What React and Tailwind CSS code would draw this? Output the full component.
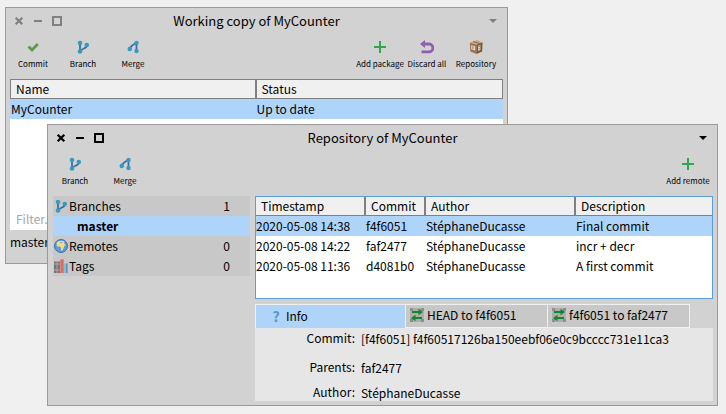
import React from "react";

function BranchIcon() {
  return (
    <svg viewBox="0 0 14 14" className="size-3.5 shrink-0" aria-hidden="true">
      <path d="M4 3v8.500M11 5C11 8.500 7 8 4.500 11" fill="none" stroke="#3d6c9e" strokeWidth="1.800" />
      <circle cx="4" cy="3" r="2.300" fill="#329cc6" />
      <circle cx="4" cy="11.500" r="2.300" fill="#329cc6" />
      <circle cx="10.800" cy="5" r="2.300" fill="#329cc6" />
    </svg>
  );
}

function MergeIcon() {
  return (
    <svg viewBox="0 0 14 14" className="size-3.5 shrink-0" aria-hidden="true">
      <path d="M10.500 3v8.500M4 9C4 5.500 7 6 10 2.500" fill="none" stroke="#3d6c9e" strokeWidth="1.800" />
      <circle cx="10.500" cy="3" r="2.200" fill="#329cc6" />
      <circle cx="10.500" cy="11" r="2.200" fill="#329cc6" />
      <circle cx="3.800" cy="9" r="2.300" fill="#329cc6" />
    </svg>
  );
}

function CheckIcon() {
  return (
    <svg viewBox="0 0 14 14" className="size-3.5" aria-hidden="true">
      <path d="M2.500 6.500 6 10l5.800-6" fill="none" stroke="#5a9c4a" strokeWidth="2.800" />
    </svg>
  );
}

function PlusIcon() {
  return (
    <svg viewBox="0 0 14 14" className="size-3.5" aria-hidden="true">
      <path d="M7 1v12M1 7h12" fill="none" stroke="#2ea850" strokeWidth="2" />
    </svg>
  );
}

function UndoIcon() {
  return (
    <svg viewBox="0 0 14 14" className="size-3.5" aria-hidden="true">
      <path d="M3.500 4H9a3.900 3.900 0 0 1 0 7.800H1.500" fill="none" stroke="#8f5fb0" strokeWidth="2.800" />
      <path d="M0 4 5 0v8z" fill="#8f5fb0" />
    </svg>
  );
}

function BoxIcon() {
  return (
    <svg viewBox="0 0 16 16" className="h-3.5 w-4" aria-hidden="true">
      <path d="M1 3 9 0l6 2.500-7 3z" fill="#c9a57c" />
      <path d="M1 3l7.500 2.500V16L1.500 13z" fill="#9a7350" />
      <path d="M8.500 5.500 15.500 2.500 15 13l-6.500 3z" fill="#7a5636" />
      <path d="M2.500 6v4.500l4.500 1.500V7zM10.500 6.500v6l2.500-1v-6z" fill="#e8dccb" />
      <path d="M4.500 7v3.500M11.800 6.500v1.500M11.800 9.500v1" stroke="#8a6544" strokeWidth="1" />
      <path d="M4.500 1.700 12 4" stroke="#8a6544" strokeWidth="1" />
    </svg>
  );
}

function GlobeIcon() {
  return (
    <svg viewBox="0 0 14 14" className="size-3.5 shrink-0" aria-hidden="true">
      <circle cx="7" cy="7" r="6.500" fill="#5b9bd8" stroke="#3a6fae" strokeWidth="1" />
      <path d="M2.500 4C4 1.500 8 1 10.500 2.500L10 4l1.800 2.500-1.600.5L9.500 9.500 7.800 12 6.800 11 7 8.500 5.500 7.500H3z" fill="#f3dc82" />
      <path d="M6 3.800 8.500 3.500" stroke="#5b9bd8" strokeWidth=".8" />
    </svg>
  );
}

function BooksIcon() {
  return (
    <svg viewBox="0 0 14 14" className="size-3.5 shrink-0" aria-hidden="true">
      <path d="M0 2.500h6V14H0z" fill="#777" />
      <path d="M6 .5h4V14H6z" fill="#e08078" />
      <path d="M10 4.500h4V14h-4z" fill="#8dbbd6" />
      <path d="M0 5h6M0 11h6M3 2.500V14" stroke="#aaa" strokeWidth=".9" />
      <path d="M8 .5V14" stroke="#c8605c" strokeWidth="1" />
      <path d="M12.700 4.500V14" stroke="#4d91b8" strokeWidth="1.200" />
    </svg>
  );
}

function SwapIcon() {
  return (
    <svg viewBox="0 0 14 14" className="size-3.5 shrink-0" aria-hidden="true">
      <path d="M0 0h14v14H0z" fill="#8e8e8e" />
      <path d="M3 0h8v14H3zM0 3h14v8H0z" fill="#b8bcb8" opacity=".7" />
      <path d="M2 4h7M12 10H5" stroke="#16852e" strokeWidth="2" />
      <path d="M8.500.8 13 4 8.500 7.200zM5.500 6.800 1 10l4.500 3.200z" fill="#16852e" />
    </svg>
  );
}

function QuestionIcon() {
  return (
    <span className="w-3 text-center text-sm leading-5 font-bold text-[#4f9ac6]" aria-hidden="true">
      ?
    </span>
  );
}

function TitleBar({ title, active }) {
  return (
    <header
      className={`grid h-7 shrink-0 grid-cols-[1fr_auto_1fr] items-center px-2 pb-0.5 ${active ? "text-black" : "text-[#808080]"}`}
    >
      <div className="flex items-center gap-2.5">
        <button aria-label="Close">
          <svg viewBox="0 0 9 9" className="size-2.5">
            <path d="M1.500 1.500l6 6M7.500 1.500l-6 6" stroke="currentColor" strokeWidth="2" />
          </svg>
        </button>
        <button aria-label="Minimize">
          <svg viewBox="0 0 8 8" className="size-2">
            <path d="M0 4h8" stroke="currentColor" strokeWidth="2" />
          </svg>
        </button>
        <button aria-label="Maximize">
          <svg viewBox="0 0 10 10" className="size-2.5">
            <path d="M1 1h8v8H1z" fill="none" stroke="currentColor" strokeWidth="2" />
          </svg>
        </button>
      </div>
      <h1 className="text-[13px] leading-5 whitespace-nowrap text-black">{title}</h1>
      <button aria-label="Window menu" className="justify-self-end px-0.5">
        <svg viewBox="0 0 8 4" className="h-1 w-2">
          <path d="M0 0h8L4 4z" fill="currentColor" />
        </svg>
      </button>
    </header>
  );
}

function ToolButton({ icon, label, width = "w-[50px]" }) {
  return (
    <button className={`flex flex-col items-center gap-1 ${width}`}>
      {icon}
      <span className="text-[8px] leading-3 whitespace-nowrap">{label}</span>
    </button>
  );
}

const commits = [
  ["2020-05-08 14:38", "f4f6051", "StéphaneDucasse", "Final commit"],
  ["2020-05-08 14:22", "faf2477", "StéphaneDucasse", "incr + decr"],
  ["2020-05-08 11:36", "d4081b0", "StéphaneDucasse", "A first commit"],
];

const details = [
  ["Commit:", "[f4f6051] f4f60517126ba150eebf06e0c9bcccc731e11ca3", "h-[29px]"],
  ["Parents:", "faf2477", "h-[25px]"],
  ["Author:", "StéphaneDucasse", "h-5"],
];

function WorkingCopyWindow() {
  return (
    <section className="absolute top-[7px] right-[218px] bottom-[150px] left-[5px] flex flex-col border border-[#9a9a9a] bg-[#d2d2d2]">
      <TitleBar title="Working copy of MyCounter" />
      <nav className="flex h-[43px] shrink-0 justify-between pt-1 pr-1.5 pl-0.5">
        <div className="flex items-start">
          <ToolButton icon={<CheckIcon />} label="Commit" />
          <ToolButton icon={<BranchIcon />} label="Branch" />
          <ToolButton icon={<MergeIcon />} label="Merge" />
        </div>
        <div className="flex items-start">
          <ToolButton icon={<PlusIcon />} label="Add package" width="w-[46px]" />
          <ToolButton icon={<UndoIcon />} label="Discard all" width="w-12" />
          <ToolButton icon={<BoxIcon />} label="Repository" />
        </div>
      </nav>
      <div className="mr-1 ml-1 flex min-h-0 flex-1 flex-col bg-white">
        <table className="w-full table-fixed border-separate border-spacing-0 text-left">
          <thead>
            <tr className="h-5 bg-[#f0f0f0]">
              <th className="w-1/2 border border-r-2 border-[#808080] p-0 pl-[5px] leading-[18px] font-normal">Name</th>
              <th className="border border-l-0 border-[#808080] p-0 pl-[5px] leading-[18px] font-normal">Status</th>
            </tr>
          </thead>
          <tbody>
            <tr className="h-5 bg-[#aed4fa]">
              <td className="p-0 pl-px">MyCounter</td>
              <td className="p-0">Up to date</td>
            </tr>
          </tbody>
        </table>
        <input
          aria-label="Filter"
          placeholder="Filter..."
          className="mt-auto h-6 w-full bg-white px-1.5 placeholder:text-[#a8a8a8]"
        />
      </div>
      <footer className="h-[33px] shrink-0 px-1 pt-0.5">master</footer>
    </section>
  );
}

function RefRow({ icon, label, count }) {
  return (
    <li className="flex h-5 items-center gap-px pr-5 pl-px">
      {icon}
      <span className="flex-1">{label}</span>
      <span>{count}</span>
    </li>
  );
}

function RepositoryWindow() {
  return (
    <section className="absolute top-[124px] right-2 bottom-2 left-[47px] flex flex-col border border-[#9a9a9a] bg-[#d2d2d2]">
      <TitleBar title="Repository of MyCounter" active />
      <nav className="flex h-[43px] shrink-0 justify-between pt-1 pr-1 pl-0.5">
        <div className="flex items-start">
          <ToolButton icon={<BranchIcon />} label="Branch" />
          <ToolButton icon={<MergeIcon />} label="Merge" />
        </div>
        <ToolButton icon={<PlusIcon />} label="Add remote" />
      </nav>
      <div className="flex min-h-0 flex-1 gap-[5px] pr-1 pb-1 pl-[5px]">
        <ul className="w-[197px] shrink-0 self-start bg-[#c8c8c8]">
          <RefRow icon={<BranchIcon />} label="Branches" count="1" />
          <li className="h-5 bg-[#aed4fa] pl-6 font-bold">master</li>
          <RefRow icon={<GlobeIcon />} label="Remotes" count="0" />
          <RefRow icon={<BooksIcon />} label="Tags" count="0" />
        </ul>
        <div className="flex min-w-0 flex-1 flex-col">
          <div className="min-h-0 flex-1 overflow-hidden border border-[#5a9edb] bg-white">
            <table className="w-full table-fixed border-separate border-spacing-0 text-left">
              <thead>
                <tr className="h-[19px] bg-[#f0f0f0]">
                  <th className="w-[110px] border-r-2 border-b border-[#808080] p-0 pl-[5px] leading-[18px] font-normal">Timestamp</th>
                  <th className="w-[60px] border-r-2 border-b border-[#808080] p-0 pl-[5px] leading-[18px] font-normal">Commit</th>
                  <th className="w-[150px] border-r-2 border-b border-[#808080] p-0 pl-[5px] leading-[18px] font-normal">Author</th>
                  <th className="border-b border-[#808080] p-0 pl-[5px] leading-[18px] font-normal">Description</th>
                </tr>
              </thead>
              <tbody>
                {commits.map((row, i) => (
                  <tr key={row[1]} className={`h-5 ${i === 0 ? "bg-[#aed4fa]" : ""}`}>
                    {row.map((cell) => (
                      <td key={cell} className="p-0 whitespace-nowrap">{cell}</td>
                    ))}
                  </tr>
                ))}
              </tbody>
            </table>
          </div>
          <div role="tablist" className="mt-[5px] flex h-6 shrink-0">
            <button role="tab" aria-selected="true" className="flex w-[151px] items-center gap-1 border border-b-0 border-[#f0f0f0] bg-[#aed4fa] pb-0.5 pl-3.5">
              <QuestionIcon />
              Info
            </button>
            <button role="tab" aria-selected="false" className="flex w-[142px] items-center gap-[3px] border-t border-r border-b border-[#f0f0f0] bg-[#c8c8c8] pb-0.5 pl-1">
              <SwapIcon />
              HEAD to f4f6051
            </button>
            <button role="tab" aria-selected="false" className="flex w-[142px] items-center gap-[3px] border-t border-r border-b border-[#f0f0f0] bg-[#c8c8c8] pb-0.5 pl-1">
              <SwapIcon />
              f4f6051 to faf2477
            </button>
          </div>
          <dl className="h-[73px] shrink-0 overflow-hidden bg-[#e6e6e6]">
            {details.map(([name, value, height]) => (
              <div key={name} className={`flex gap-1.5 ${height}`}>
                <dt className="w-[100px] shrink-0 text-right">{name}</dt>
                <dd className="pt-px whitespace-nowrap">{value}</dd>
              </div>
            ))}
          </dl>
        </div>
      </div>
    </section>
  );
}

export default function App() {
  return (
    <main className="relative min-h-screen overflow-hidden bg-[#f0f0f0] font-['Noto_Sans_CJK_SC','Noto_Sans',sans-serif] text-[12px] leading-5 text-black">
      <WorkingCopyWindow />
      <RepositoryWindow />
    </main>
  );
}
